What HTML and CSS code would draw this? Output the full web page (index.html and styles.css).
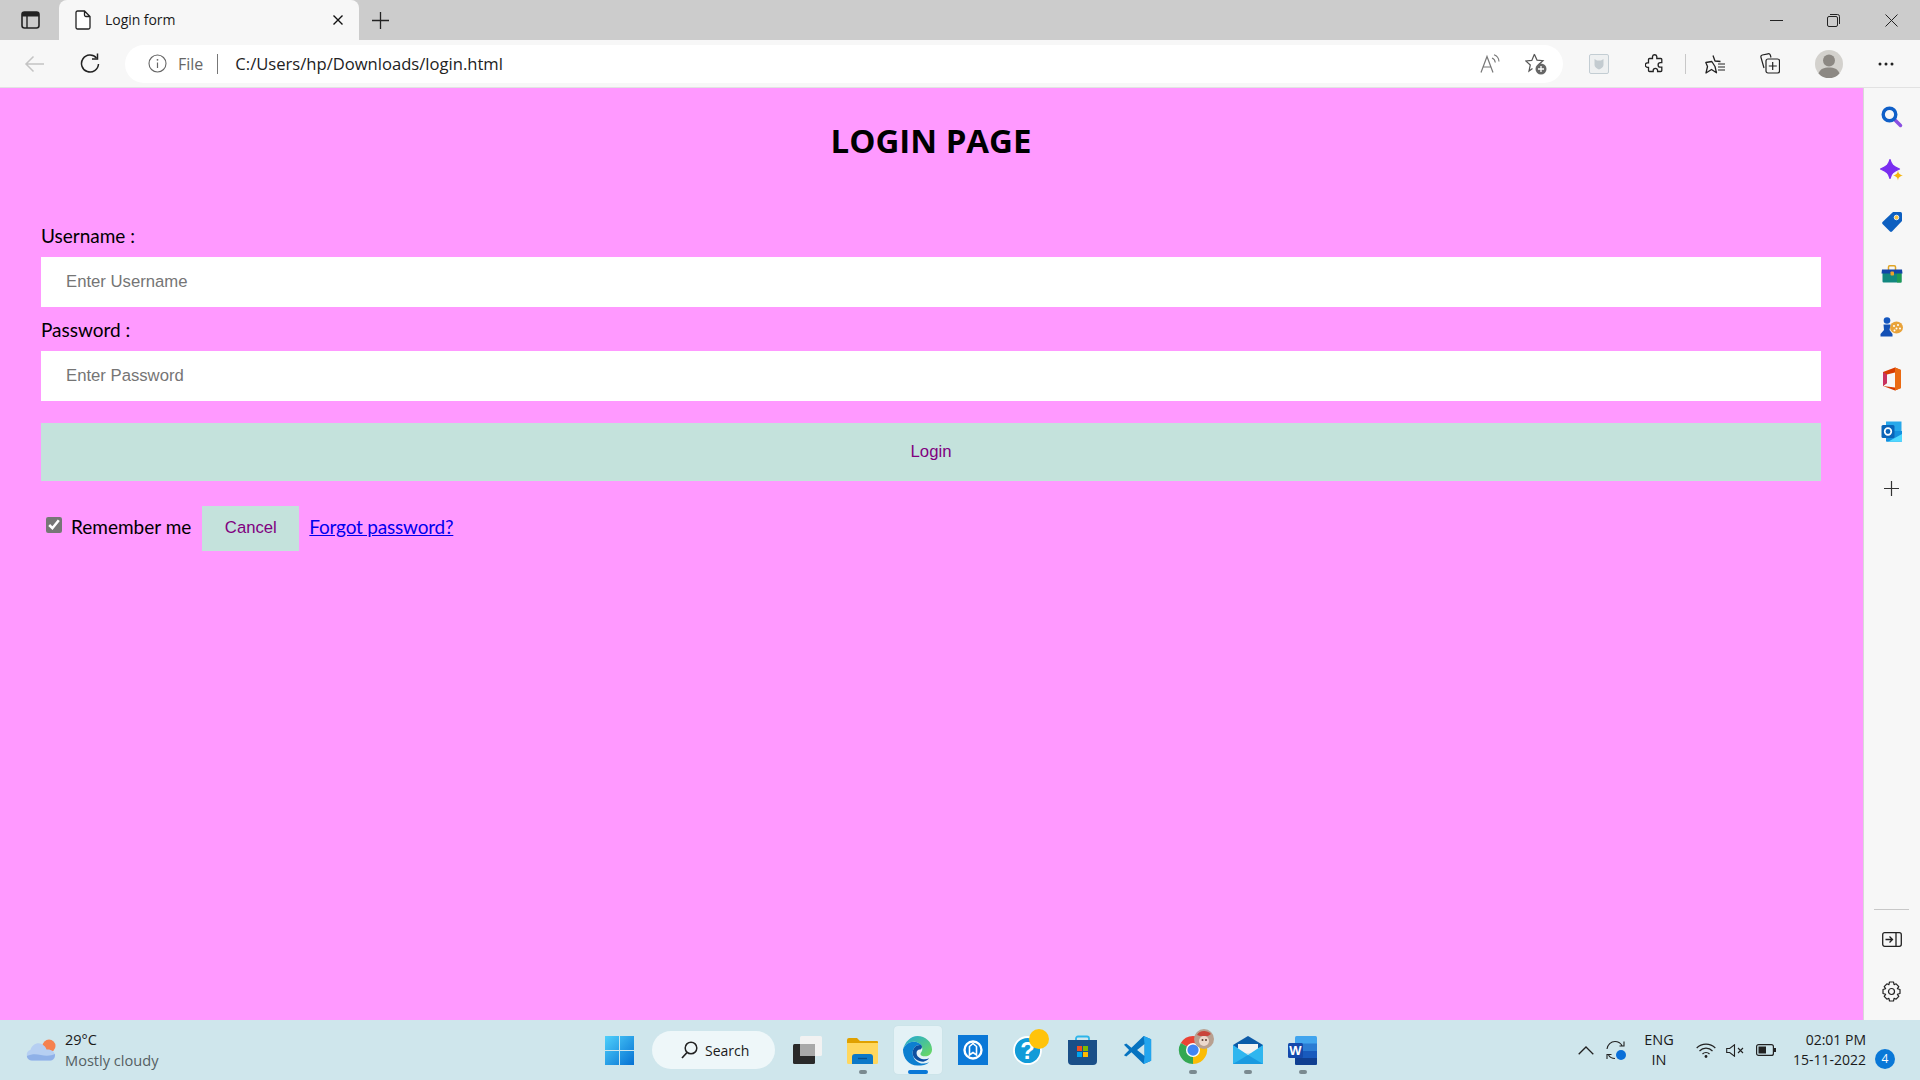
FILE: index.html
```html
<!DOCTYPE html>
<html lang="en">
<head>
<meta charset="utf-8">
<title>Login form</title>
<link rel="stylesheet" href="styles.css">
</head>
<body>
<div class="app">
  <header class="tabbar">
    <svg class="tabs-btn" width="19" height="18" viewBox="0 0 19 18"><rect x="1" y="1" width="17" height="16" rx="2.5" fill="none" stroke="#222" stroke-width="1.6"/><path d="M1 5.5V3.500a2.500 2.500 0 0 1 2.500-2.500h12a2.500 2.500 0 0 1 2.500 2.500V5.500z" fill="#222"/><path d="M6 5v12" stroke="#222" stroke-width="1.400"/></svg>
    <div class="tab">
      <svg class="tab-icon" width="16" height="20" viewBox="0 0 16 20"><path d="M2.500 1H9.500L15 6.500V17.500a1.500 1.500 0 0 1-1.500 1.500h-11A1.500 1.500 0 0 1 1 17.500V2.500A1.500 1.500 0 0 1 2.500 1zM9.500 1V5a1.500 1.500 0 0 0 1.500 1.500h4" fill="#fff" stroke="#222" stroke-width="1.300"/></svg>
      <span class="tab-title">Login form</span>
      <svg class="tab-close" width="10" height="10" viewBox="0 0 10 10"><path d="M.5.5l9 9M9.500.5l-9 9" stroke="#111" stroke-width="1.400"/></svg>
    </div>
    <svg class="new-tab" width="17" height="17" viewBox="0 0 17 17"><path d="M8.500 0v17M0 8.500h17" stroke="#222" stroke-width="1.300"/></svg>
    <div class="window-btns">
      <svg width="13" height="13" viewBox="0 0 13 13"><path d="M0 6.500h13" stroke="#222" stroke-width="1"/></svg>
      <svg class="win-restore" width="13" height="13" viewBox="0 0 13 13"><rect x=".5" y="2.500" width="10" height="10" rx="1.500" fill="none" stroke="#222"/><path d="M3 .5h7.500a2 2 0 0 1 2 2V10" fill="none" stroke="#222"/></svg>
      <svg class="win-close" width="13" height="13" viewBox="0 0 13 13"><path d="M.5.5l12 12M12.500.5l-12 12" stroke="#222" stroke-width="1"/></svg>
    </div>
  </header>

  <div class="toolbar">
    <svg class="back" width="21" height="18" viewBox="0 0 21 18"><path d="M20 9H2M9.500 1.500L2 9l7.500 7.500" fill="none" stroke="#c4c4c4" stroke-width="1.500"/></svg>
    <svg class="reload" width="20" height="21" viewBox="0 0 20 21"><path d="M16.500 5A8.500 8.500 0 1 0 18.500 11" fill="none" stroke="#222" stroke-width="1.500"/><path d="M17.500 0.500V6h-5.500" fill="none" stroke="#222" stroke-width="1.500"/></svg>
    <div class="address">
      <svg class="info" width="19" height="19" viewBox="0 0 19 19"><circle cx="9.500" cy="9.500" r="8.500" fill="none" stroke="#666" stroke-width="1.100"/><path d="M9.500 8.500v5.500" stroke="#666" stroke-width="1.200"/><circle cx="9.500" cy="5.800" r=".9" fill="#666"/></svg>
      <span class="file">File</span>
      <span class="addr-sep"></span>
      <span class="url">C:/Users/hp/Downloads/login.html</span>
      <svg class="read" width="20" height="19" viewBox="0 0 20 19"><path d="M1 18.500L7 2.500l6 16M3 13h8" fill="none" stroke="#777" stroke-width="1.200"/><path d="M12 4c2 .8 3 2.300 3.300 4.500M14 .8c2.800 1 4.800 3.500 5 6.700" fill="none" stroke="#777" stroke-width="1.100"/></svg>
      <svg class="star-add" width="22" height="22" viewBox="0 0 22 22"><path d="M9.500 1.500l2.500 5.600 6 .6-4.500 4-0.500 1.800M7.500 15.500l-3.500 2.500 1.300-6-4.500-4 6-.6 2.700-6.400" fill="none" stroke="#555" stroke-width="1.200"/><circle cx="16" cy="16" r="5.500" fill="#666"/><path d="M16 13v6M13 16h6" stroke="#fff" stroke-width="1.300"/></svg>
    </div>
    <svg class="shield" width="20" height="20" viewBox="0 0 20 20"><rect x=".5" y=".5" width="19" height="19" rx="1.500" fill="#eef0f1" stroke="#c3cdd3"/><path d="M5.500 5l2.500 1.500h4L14.500 5v6c0 2-2.500 3.500-4.500 4.500C8 14.500 5.500 13 5.500 11z" fill="#c3cbd0"/></svg>
    <svg class="puzzle" width="19" height="20" viewBox="0 0 19 20"><path d="M7.500 2.500a2.200 2.200 0 0 1 4.300 0V4.500h4a1 1 0 0 1 1 1v3.200h-1.500a2.200 2.200 0 0 0 0 4.400h1.500v3.400a1 1 0 0 1-1 1h-3.200v-1a2.200 2.200 0 0 0-4.400 0v1H4.500a1 1 0 0 1-1-1v-3.200h-1a2.200 2.200 0 0 1 0-4.400h1V5.500a1 1 0 0 1 1-1h3z" fill="none" stroke="#222" stroke-width="1.300"/></svg>
    <span class="tool-sep"></span>
    <svg class="favs" width="21" height="20" viewBox="0 0 21 20"><path d="M8 1.500l2 5.500 5.500.5M10 12.500l1.500 6.300-5-3.300-5.500 3.500 1.500-6.500L.8 8.500l6-1z" fill="none" stroke="#222" stroke-width="1.300" stroke-linejoin="round"/><path d="M13 10h7M13 13h7M13 16h7" stroke="#222" stroke-width="1.200"/></svg>
    <svg class="collect" width="20" height="21" viewBox="0 0 20 21"><path d="M4 15L1 4.500a2 2 0 0 1 1.300-2.500L8 .8a2 2 0 0 1 2.300 1.200L11 4.500" fill="none" stroke="#222" stroke-width="1.200"/><rect x="6" y="6" width="13.500" height="14" rx="2" fill="#f7f7f7" stroke="#222" stroke-width="1.200"/><path d="M12.700 9v8M8.800 13h8" stroke="#222" stroke-width="1.200"/></svg>
    <svg class="avatar" width="28" height="28" viewBox="0 0 28 28"><circle cx="14" cy="14" r="14" fill="#d3d1cd"/><circle cx="14" cy="10.500" r="6" fill="#8c8883"/><path d="M3.500 23.500C5 19 9 17.500 14 17.500s9 1.500 10.500 6A14 14 0 0 1 3.500 23.500z" fill="#8c8883"/></svg>
    <svg class="dots" width="16" height="4" viewBox="0 0 16 4"><circle cx="2" cy="2" r="1.500" fill="#222"/><circle cx="8" cy="2" r="1.500" fill="#222"/><circle cx="14" cy="2" r="1.500" fill="#222"/></svg>
  </div>

  <div class="middle">
    <main class="page">
      <h1 class="title">LOGIN PAGE</h1>
      <form class="form">
        <label class="field-label" for="u">Username :</label>
        <input class="field" id="u" type="text" placeholder="Enter Username">
        <label class="field-label second" for="p">Password :</label>
        <input class="field" id="p" type="password" placeholder="Enter Password">
        <button class="btn btn-login" type="button">Login</button>
        <div class="options">
          <input class="remember" type="checkbox" checked>
          <span class="remember-text">Remember me</span>
          <button class="btn btn-cancel" type="button">Cancel</button>
          <a class="forgot" href="#">Forgot password?</a>
        </div>
      </form>
    </main>

    <aside class="sidebar">
      <div class="side-item"><svg width="22" height="22" viewBox="0 0 22 22"><path d="M13.500 13.500l6 6" stroke="#8a4fe0" stroke-width="3.500" stroke-linecap="round"/><circle cx="8.500" cy="8.500" r="6.300" fill="none" stroke="#0f5fc8" stroke-width="3.400"/></svg></div>
      <div class="side-item"><svg width="24" height="24" viewBox="0 -2 24 24"><path d="M10 .5c1.200 5 3 6.800 9.500 9.500-6.500 2.700-8.300 4.500-9.500 9.500C8.800 14.500 7 12.700.5 10 7 7.300 8.800 5.500 10 .5z" fill="#7a2df0" stroke="#7a2df0" stroke-width="1.200" stroke-linejoin="round"/><path d="M18 11.500c.5 3 1.500 4.200 5 5-3.500.8-4.500 2-5 5-.5-3-1.500-4.200-5-5 3.500-.8 4.500-2 5-5z" fill="#f5b50e"/></svg></div>
      <div class="side-item"><svg width="22" height="22" viewBox="0 0 22 22"><path d="M12 1h7.500a1.500 1.500 0 0 1 1.500 1.500V10L11 20.500a1.500 1.500 0 0 1-2 0l-7.500-7.500a1.500 1.500 0 0 1 0-2z" fill="#0d5fc0"/><circle cx="15.500" cy="6.500" r="2.300" fill="#f6c343" stroke="#fff" stroke-width=".8"/></svg></div>
      <div class="side-item"><svg width="22" height="18" viewBox="0 0 22 18"><path d="M7.500 5V2a1.200 1.200 0 0 1 1.200-1.200h4.600A1.200 1.200 0 0 1 14.500 2V5" fill="none" stroke="#e0a526" stroke-width="1.500"/><rect x="1.500" y="7" width="19" height="10.500" rx="1" fill="#12877f"/><path d="M16 7h4.500v10.500H16z" fill="#1f9a54"/><path d="M1 4.500h20L21.500 8.500H.5z" fill="#1245a8"/><rect x="9.500" y="6.500" width="3.500" height="4" rx=".8" fill="#eda22a"/></svg></div>
      <div class="side-item"><svg width="23" height="20" viewBox="0 0 23 20"><ellipse cx="16.500" cy="10.500" rx="6.500" ry="6" fill="#e9a33a"/><circle cx="14" cy="9" r="1" fill="#fff"/><circle cx="18" cy="8" r="1" fill="#fff"/><circle cx="16.500" cy="11.500" r="1" fill="#fff"/><circle cx="20" cy="11.500" r="1" fill="#fff"/><circle cx="14.500" cy="13.500" r="1" fill="#fff"/><circle cx="7" cy="3.500" r="3.300" fill="#1557c0"/><path d="M3.500 7.500h7L9.500 13l3 4v2.500H.5V17l3.500-4z" fill="#1350b5"/></svg></div>
      <div class="side-item"><svg width="20" height="24" viewBox="0 0 20 24"><path d="M1 5L13 .5 19 3v18l-6 2.500L1 19l12 1.500V5.500L5 7.500V16L1 19z" fill="#d83b01"/><path d="M13 .5L19 3v18l-6 2.500z" fill="#ea6a12"/><path d="M1 5l4 2.500V16l-4 3z" fill="#c8315f"/></svg></div>
      <div class="side-item"><svg width="22" height="21" viewBox="0 0 22 21"><rect x="5" y="0.500" width="15.500" height="12" fill="#28a8ea"/><path d="M5 10h16v10a.8.8 0 0 1-.8.8H5.800A.8.8 0 0 1 5 20z" fill="#1490df"/><path d="M7 20.800L21 13v7a.8.8 0 0 1-.8.8z" fill="#50d9ff"/><rect x=".5" y="4" width="13" height="13" rx="1.500" fill="#0a64b8"/><circle cx="7" cy="10.500" r="3.300" fill="none" stroke="#fff" stroke-width="1.700"/></svg></div>
      <div class="side-item side-plus"><svg width="15" height="15" viewBox="0 0 15 15"><path d="M7.500 0v15M0 7.500h15" stroke="#333" stroke-width="1.200"/></svg></div>
      <div class="side-rule"></div>
      <div class="side-item"><svg width="20" height="15" viewBox="0 0 20 15"><rect x=".7" y=".7" width="18.600" height="13.600" rx="2" fill="none" stroke="#222" stroke-width="1.300"/><path d="M14 1v13M3.500 7.500h7M7.500 4.500l3 3-3 3" fill="none" stroke="#222" stroke-width="1.300"/></svg></div>
      <div class="side-item"><svg width="21" height="21" viewBox="0 0 21 21"><path d="M8.500 1h4l.6 2.700 2-.9 2.700 2.900-1.400 2 2.600.8v4l-2.600.8 1.400 2-2.700 2.900-2-.9-.6 2.700h-4l-.6-2.700-2 .9-2.700-2.900 1.400-2-2.600-.8v-4l2.600-.8-1.400-2 2.700-2.900 2 .9z" fill="none" stroke="#222" stroke-width="1.200" stroke-linejoin="round"/><circle cx="10.500" cy="10.500" r="3" fill="none" stroke="#222" stroke-width="1.200"/></svg></div>
    </aside>
  </div>

  <footer class="taskbar">
    <div class="weather">
      <svg width="30" height="22" viewBox="0 0 30 22"><circle cx="23" cy="7" r="6.500" fill="#f5814f"/><path d="M6 21.500A5.500 5.500 0 0 1 4.500 10.800C6 6 11 3 15.500 5c3 1.300 4.500 3.500 5 5.500 4-.6 8.500 1.500 8.500 6 0 3-2 5-4.500 5z" fill="#b6cff2"/><path d="M.8 17c5-2 9-2 14-1 5 1 10 1 14.200-1 .5 3-2 6.500-4.500 6.500H6A5.500 5.500 0 0 1 .8 17z" fill="#8fb1e8"/></svg>
      <div class="weather-text"><span class="temp">29°C</span><span class="cond">Mostly cloudy</span></div>
    </div>
    <svg class="start" width="29" height="29" viewBox="0 0 29 29"><defs><linearGradient id="w" x1="0" y1="0" x2="1" y2="1"><stop offset="0" stop-color="#4fd0fb"/><stop offset="1" stop-color="#0571d3"/></linearGradient></defs><path d="M0 0h14v14H0zM15 0h14v14H15zM0 15h14v14H0zM15 15h14v14H15z" fill="url(#w)"/></svg>
    <div class="search-pill">
      <svg width="17" height="18" viewBox="0 0 17 18"><circle cx="10" cy="7" r="5.800" fill="none" stroke="#222" stroke-width="1.500"/><path d="M6 11.500L1 17" stroke="#222" stroke-width="1.700"/></svg>
      <span class="search-text">Search</span>
    </div>
    <div class="tasks">
      <div class="task"><svg width="29" height="28" viewBox="0 0 29 28"><rect x="0" y="8" width="22" height="20" rx="1.500" fill="#2a2a2a"/><rect x="7" y="0" width="22" height="20" rx="1.500" fill="#f2f2f2"/><rect x="7" y="8" width="15" height="12" fill="#a9a9a9"/></svg></div>
      <div class="task running"><svg width="31" height="27" viewBox="0 0 31 27"><path d="M0 3a2 2 0 0 1 2-2h8l3 3h17a1 1 0 0 1 1 1v4H0z" fill="#e0a100"/><path d="M0 6h31v19.500a1.500 1.500 0 0 1-1.500 1.500h-28A1.500 1.500 0 0 1 0 25.500z" fill="#ffd75e"/><path d="M5 27v-7a3 3 0 0 1 3-3h15a3 3 0 0 1 3 3v7z" fill="#0c78c8"/><path d="M11 21.500h9" stroke="#0a4f8a" stroke-width="1.400"/></svg></div>
      <div class="task active"><svg width="31" height="31" viewBox="0 0 32 32"><defs><linearGradient id="e1" x1="0" y1="0" x2="1" y2="1"><stop offset="0" stop-color="#1fa6d8"/><stop offset="1" stop-color="#6fdc5c"/></linearGradient></defs><path d="M1 15C3 7 9 1 16 1c8 0 15 6 15 14 0 5-4 7-7 7-3 0-5-1-5-2.500 0-1.500 2-2 2-5 0-5-5-7.500-9-7.500-5 0-9 3-11 8z" fill="url(#e1)"/><path d="M1 15c2-5 6-8 11-8 4 0 7 2 8 3.500-5-1-9 3-9 8 0 6 5 11 11 11 2 0 4-.5 6-1.500-3 3-7 3.500-12 3.500C7 31.500 1 24 1 15z" fill="#0c7fd0"/><path d="M11 18.500c0-5 4-9 9-8 1 1 1 3-1 4.500-2-.5-4 1-4 3.500 0 3 3 6 7 6.500 2 .2 4 0 6-1-1 1.500-3 3-6 3.500-6 0-11-3.500-11-9z" fill="#0d4fa0"/></svg></div>
      <div class="task"><svg width="30" height="30" viewBox="0 0 30 30"><rect width="30" height="30" fill="#0a78d7"/><circle cx="15" cy="15" r="8.500" fill="none" stroke="#fff" stroke-width="2.400"/><path d="M11.500 20V11.500L15 8.500l3.500 3V20L15 17.500z" fill="none" stroke="#fff" stroke-width="1.600"/></svg></div>
      <div class="task help"><svg class="help-icon" width="29" height="29" viewBox="0 0 29 29"><circle cx="14.500" cy="14.500" r="13.500" fill="#129bd8" stroke="#fff" stroke-width="1.800"/><text class="help-q" x="14.500" y="23" text-anchor="middle">?</text></svg><span class="notify-dot"></span></div>
      <div class="task"><svg width="29" height="30" viewBox="0 0 29 30"><path d="M8 6V3.500A2 2 0 0 1 10 1.500h9A2 2 0 0 1 21 3.500V6" fill="none" stroke="#2eb5ea" stroke-width="1.800"/><path d="M0 5h29v21a4 4 0 0 1-4 4H4a4 4 0 0 1-4-4z" fill="#1a4f88"/><path d="M9 11h5v5H9z" fill="#f25022"/><path d="M15 11h5v5h-5z" fill="#7fba00"/><path d="M9 17h5v5H9z" fill="#00a4ef"/><path d="M15 17h5v5h-5z" fill="#ffb900"/></svg></div>
      <div class="task"><svg width="30" height="30" viewBox="0 0 32 32"><path fill-rule="evenodd" d="M22 1L9 13.500 3.500 9 1 10.500 6.500 16 1 21.500 3.500 23 9 18.500 22 31l8-3.500v-23zM23 9.500L15 16l8 6.500z" fill="#0673c0"/><path d="M22 1l8 3.500v23L22 31l1-8.500V9.500z" fill="#22a5ee"/></svg></div>
      <div class="task running chrome"><svg width="30" height="30" viewBox="0 0 32 32"><path d="M16 16L3 8.500A15 15 0 0 1 29 8.500z" fill="#ea4335"/><path d="M16 16L29 8.500A15 15 0 0 1 16 31z" fill="#fbbc05"/><path d="M16 16V31A15 15 0 0 1 3 8.500z" fill="#34a853"/><circle cx="16" cy="16" r="7.500" fill="#fff"/><circle cx="16" cy="16" r="6" fill="#4285f4"/></svg><svg class="chrome-badge" width="20" height="20" viewBox="0 0 20 20"><circle cx="10" cy="10" r="10" fill="#b8a090"/><path d="M3 6C5 2 12 0 17 5L14 7H6z" fill="#c9453a"/><circle cx="10" cy="12" r="5" fill="#ecd8cb"/><circle cx="8.500" cy="11" r="1" fill="#5a3d33"/><circle cx="12" cy="11" r="1" fill="#5a3d33"/></svg></div>
      <div class="task running"><svg width="30" height="28" viewBox="0 0 30 28"><path d="M0 9L15 0l15 9v3H0z" fill="#0c5ba8"/><path d="M5 8h20v9H5z" fill="#f2f2f2"/><path d="M0 9l15 10L30 9v19H0z" fill="#2fb6ef"/><path d="M0 28l15-9 15 9z" fill="#1a9ae0"/></svg></div>
      <div class="task running"><svg width="29" height="29" viewBox="0 0 29 29"><rect x="7" y="0" width="22" height="29" rx="1.500" fill="#41a5ee"/><rect x="7" y="7.500" width="22" height="7.500" fill="#2b7cd3"/><rect x="7" y="15" width="22" height="7" fill="#185abd"/><path d="M7 22h22v5.500a1.500 1.500 0 0 1-1.500 1.500h-19A1.500 1.500 0 0 1 7 27.500z" fill="#103f91"/><rect x="0" y="7" width="15" height="15" rx="1.500" fill="#1449ab"/><text class="word-w" x="7.500" y="18.500" text-anchor="middle">W</text></svg></div>
    </div>
    <div class="tray">
      <svg class="chev" width="16" height="9" viewBox="0 0 16 9"><path d="M.7 8.300L8 1l7.300 7.300" fill="none" stroke="#222" stroke-width="1.300"/></svg>
      <svg class="sync" width="20" height="20" viewBox="0 0 20 20"><path d="M1 9C1.500 4.500 5 1.500 9 1.500c3 0 5.500 1.500 7 4M18 1.500V6h-4.500" fill="none" stroke="#222" stroke-width="1.100"/><path d="M9 18.500c-2.500 0-5-1-6.500-3.500M1 19v-4.500h4.500" fill="none" stroke="#222" stroke-width="1.100"/><circle cx="15" cy="15" r="5" fill="#0a6fd8"/></svg>
      <div class="lang"><span>ENG</span><span>IN</span></div>
      <svg class="wifi" width="20" height="15" viewBox="0 0 20 15"><path d="M.7 5a13 13 0 0 1 18.600 0M3.500 8a9 9 0 0 1 13 0M6.500 11a4.800 4.800 0 0 1 7 0" fill="none" stroke="#222" stroke-width="1.200"/><circle cx="10" cy="13.500" r="1.400" fill="#222"/></svg>
      <svg class="mute" width="19" height="13" viewBox="0 0 19 13"><path d="M.7 4.500h3L8.500.8v11.400L3.700 8.500h-3z" fill="none" stroke="#222" stroke-width="1.100"/><path d="M12 4l5 5M17 4l-5 5" stroke="#222" stroke-width="1.100"/></svg>
      <svg class="battery" width="20" height="12" viewBox="0 0 20 12"><rect x=".6" y=".6" width="16.800" height="10.800" rx="2" fill="none" stroke="#222" stroke-width="1.200"/><rect x="2.500" y="2.500" width="7.500" height="7" fill="#222"/><rect x="18" y="4" width="2" height="4" fill="#222"/></svg>
      <div class="clock"><span>02:01 PM</span><span>15-11-2022</span></div>
      <span class="badge">4</span>
    </div>
  </footer>
</div>
</body>
</html>
```

FILE: styles.css
```css
* { box-sizing: border-box; }
html, body { margin: 0; height: 100%; }
svg { display: block; flex: none; }
.app {
  width: 1920px;
  height: 1080px;
  display: grid;
  grid-template-rows: 40px 48px 932px 60px;
  overflow: hidden;
  font-family: "Open Sans", sans-serif;
  color: #1a1a1a;
}

/* Browser tab strip */
.tabbar { display: flex; align-items: center; background: #cccccc; }
.tabs-btn { margin-left: 21px; }
.tab {
  margin-left: 19px;
  width: 300px;
  height: 40px;
  display: flex;
  align-items: center;
  background: #f7f7f7;
  border-radius: 8px 8px 0 0;
}
.tab-icon { margin-left: 16px; }
.tab-title { margin-left: 14px; margin-top: -1px; font-size: 14px; letter-spacing: -.05px; }
.tab-close { margin-left: auto; margin-right: 16px; }
.new-tab { margin-left: 13px; }
.window-btns { margin-left: auto; margin-right: 22px; display: flex; align-items: center; }
.win-restore { margin-left: 44px; }
.win-close { margin-left: 45px; }

/* Browser toolbar */
.toolbar {
  display: flex;
  align-items: center;
  background: #f7f7f7;
  border-bottom: 1px solid #e2e2e2;
}
.back { margin-left: 24px; }
.reload { margin-left: 35px; }
.address {
  margin-left: 25px;
  width: 1438px;
  height: 38px;
  display: flex;
  align-items: center;
  background: #fff;
  border-radius: 19px;
}
.info { margin-left: 23px; }
.file { margin-left: 11px; font-size: 16px; color: #666; }
.addr-sep { margin-left: 14px; width: 1px; height: 20px; background: #777; }
.url { margin-left: 17px; font-size: 16.600px; color: #222; }
.read { margin-left: auto; }
.star-add { margin-left: 25px; margin-right: 16px; }
.shield { margin-left: 26px; }
.puzzle { margin-left: 36px; }
.tool-sep { margin-left: 21px; width: 1px; height: 20px; background: #c8c8c8; }
.favs { margin-left: 19px; }
.collect { margin-left: 34px; }
.avatar { margin-left: 35px; }
.dots { margin-left: 35px; }

/* Page */
.middle { display: flex; min-height: 0; }
.page { flex: 1; min-width: 0; background: #ff99ff; padding: 0 42px 0 41px; }
.title {
  margin: 0;
  padding-top: 30px;
  height: 114px;
  text-align: center;
  font-family: "Open Sans", sans-serif;
  font-size: 33px;
  line-height: 46px;
  font-weight: 700;
  color: #000;
}
.form { display: flex; flex-direction: column; align-items: stretch; }
.field-label {
  height: 55px;
  padding: 20px 0 0;
  line-height: 27px;
  font-family: Lato, sans-serif;
  font-size: 19px;
  color: #000;
}
.field-label.second { height: 44px; padding-top: 9px; }
.field {
  height: 50px;
  border: 0;
  padding: 0 25px;
  background: #fff;
  font-family: "Liberation Sans", sans-serif;
  font-size: 16.700px;
  outline: none;
}
.field::placeholder { color: #757575; opacity: 1; }
.btn {
  border: 0;
  padding: 0;
  background: #c4e2dc;
  color: #800080;
  font-family: "Liberation Sans", sans-serif;
  font-size: 16.700px;
}
.btn-login { height: 58px; margin-top: 22px; }
.options {
  display: flex;
  align-items: center;
  margin-top: 25px;
  font-family: Lato, sans-serif;
  font-size: 19px;
  line-height: 24px;
  color: #000;
}
.remember { width: 16px; height: 16px; margin: 0 0 7px 5px; accent-color: #767676; }
.remember-text { margin-left: 9px; margin-bottom: 4px; }
.btn-cancel { margin-left: 11px; width: 97px; height: 45px; padding-bottom: 2px; }
.forgot { margin-left: 10px; margin-bottom: 4px; color: #0000ee; letter-spacing: -.2px; }

/* Edge sidebar */
.sidebar {
  width: 57px;
  display: flex;
  flex-direction: column;
  align-items: center;
  padding: 2.500px 1px 2px 0;
  background: #f7f7f7;
  border-left: 1px solid #d8d8d8;
}
.side-item { height: 52.500px; display: flex; align-items: center; justify-content: center; }
.side-plus { margin-top: 4px; }
.side-rule { margin-top: auto; margin-bottom: 3px; width: 35px; height: 1px; background: #c8c8c8; }

/* Windows taskbar */
.taskbar { display: flex; align-items: center; background: #cfe6ec; }
.weather { flex: 0 0 605px; display: flex; align-items: center; padding-left: 26px; }
.weather-text { margin-left: 9px; display: flex; flex-direction: column; }
.temp { font-size: 14.500px; line-height: 20px; color: #1a1a1a; }
.cond { font-size: 14.600px; line-height: 20px; color: #555f63; }
.search-pill {
  margin-left: 18px;
  width: 123px;
  height: 38px;
  display: flex;
  align-items: center;
  padding-left: 29px;
  background: #eef7f9;
  border-radius: 19px;
}
.search-text { margin-left: 7px; font-size: 14px; }
.tasks { margin-left: 5px; display: flex; height: 60px; }
.task {
  position: relative;
  width: 55px;
  height: 60px;
  display: flex;
  align-items: center;
  justify-content: center;
}
.task.running::after {
  content: "";
  position: absolute;
  left: 50%;
  bottom: 6px;
  width: 8px;
  height: 4px;
  margin-left: -4px;
  border-radius: 2px;
  background: #7a8a90;
}
.task.active::before {
  content: "";
  position: absolute;
  left: 4px;
  top: 6px;
  width: 48px;
  height: 48px;
  border-radius: 4px;
  background: #e4f2f6;
  box-shadow: 0 0 1px #b9d2d8;
}
.task.active svg { position: relative; }
.task.active::after {
  content: "";
  position: absolute;
  left: 50%;
  bottom: 6px;
  width: 20px;
  height: 4px;
  margin-left: -10px;
  border-radius: 2px;
  background: #0a78d7;
}
.help-q { font-family: "Liberation Sans", sans-serif; font-size: 24px; font-weight: 700; fill: #fff; }
.word-w { font-family: "Liberation Sans", sans-serif; font-size: 13px; font-weight: 700; fill: #fff; }
.notify-dot {
  position: absolute;
  left: 29px;
  top: 9px;
  width: 20px;
  height: 20px;
  border-radius: 50%;
  background: #ffc30b;
}
.chrome-badge { position: absolute; left: 29px; top: 9px; }
.tray { margin-left: auto; margin-right: 25px; display: flex; align-items: center; }
.sync { margin-left: 12px; }
.lang {
  margin-left: 19px;
  width: 28px;
  display: flex;
  flex-direction: column;
  align-items: center;
  font-size: 14.500px;
  line-height: 20px;
}
.wifi { margin-left: 23px; }
.mute { margin-left: 10px; }
.battery { margin-left: 11px; }
.clock {
  margin-left: 19px;
  width: 71px;
  display: flex;
  flex-direction: column;
  align-items: flex-end;
  font-size: 14px;
  line-height: 20px;
  white-space: nowrap;
}
.badge {
  margin-left: 9px;
  margin-top: 18px;
  width: 20px;
  height: 20px;
  border-radius: 50%;
  background: #0a78d7;
  color: #fff;
  font-size: 12px;
  line-height: 20px;
  text-align: center;
}
```
